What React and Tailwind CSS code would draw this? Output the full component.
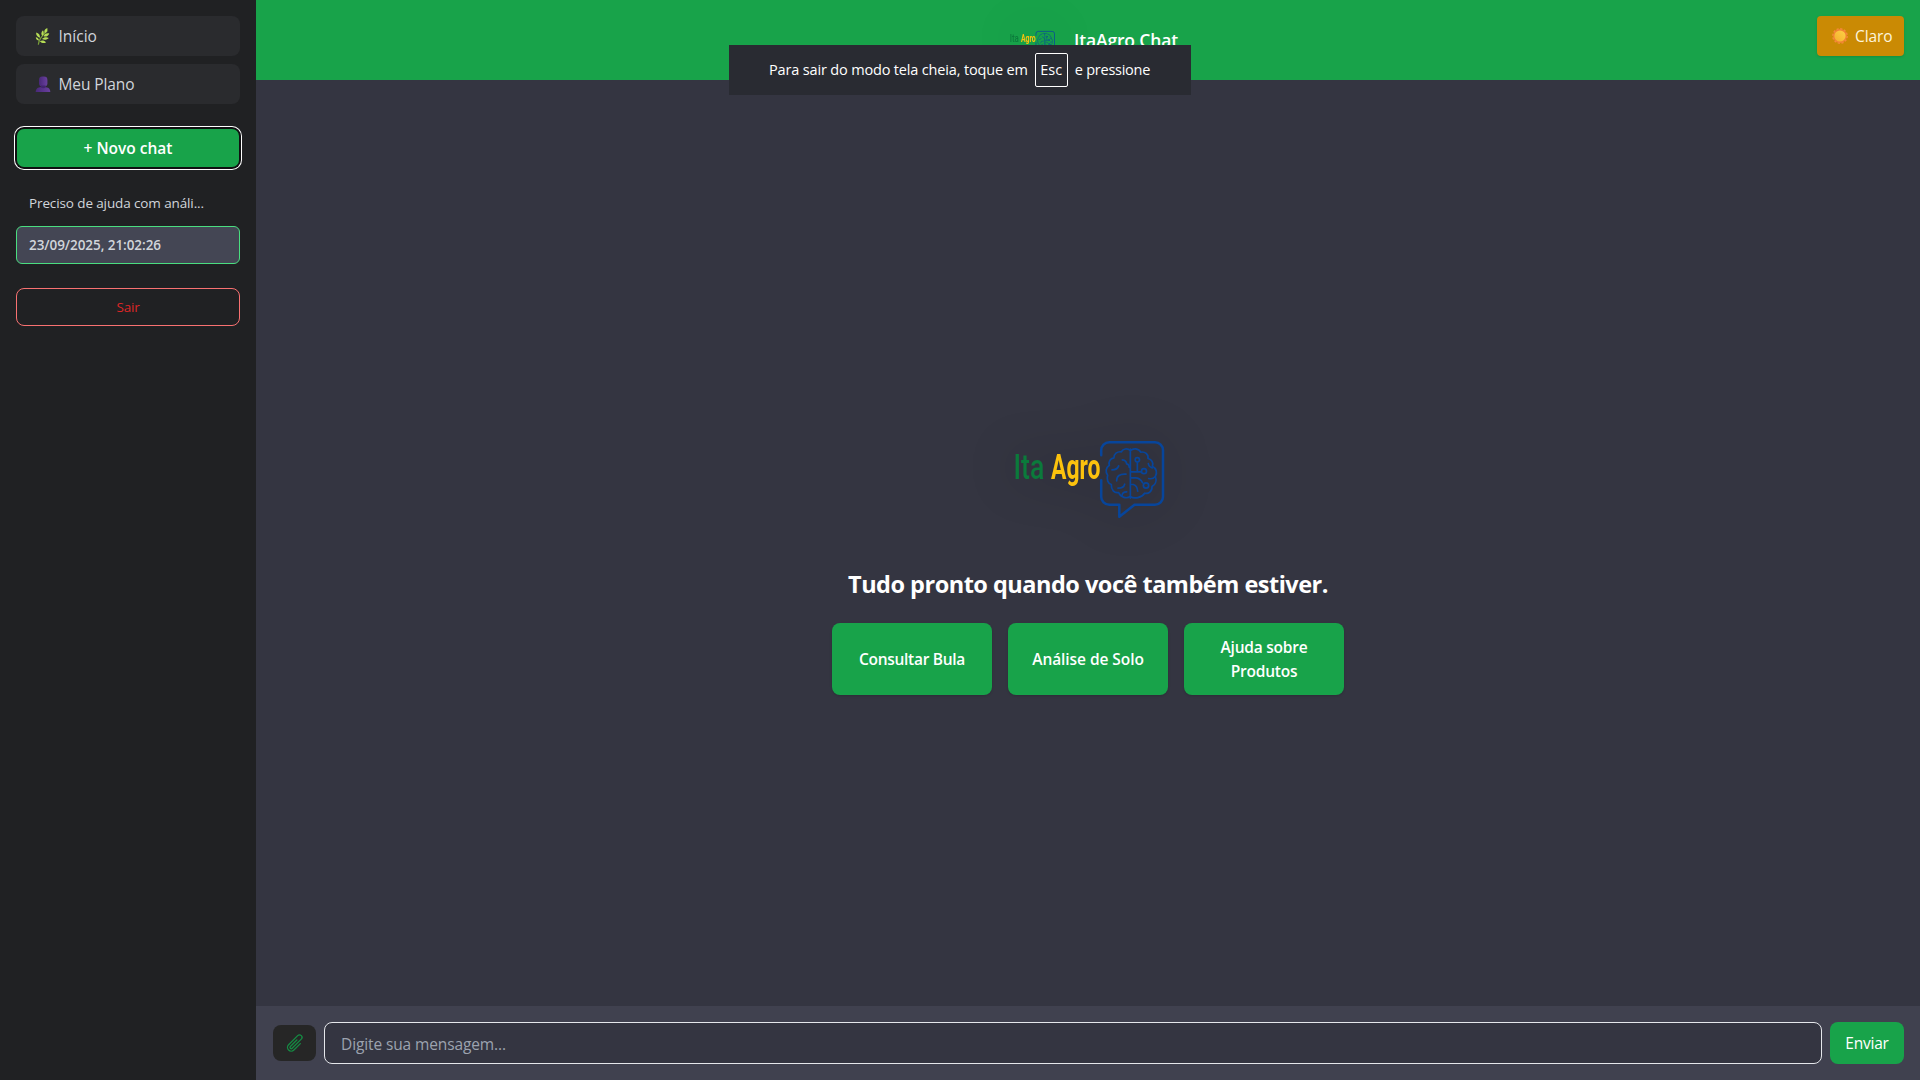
function Logo({ className }) {
  return (
    <svg viewBox="0 0 160 160" className={className} fill="none" aria-label="Ita Agro">
      <g fontFamily='"Roboto", "Liberation Sans", sans-serif' fontSize="35">
        <text transform="translate(5.500 88) scale(.76 1)" fontWeight="500" fill="#0b7a3b">Ita</text>
        <text transform="translate(43 88) scale(.655 1)" fontWeight="700" fill="#fcc20d">Agro</text>
      </g>
      <g transform="translate(0 -.8)" stroke="#07459b" strokeLinecap="round" strokeLinejoin="round">
        <path strokeWidth="2.5" d="M93.2 65V60a8 8 0 0 1 8-8H147a8 8 0 0 1 8 8v46.500a8 8 0 0 1-8 8H126.500L111.300 126.500V114.500H101.200a8 8 0 0 1-8-8V90" />
        <g transform="translate(82 39) scale(.33333)" strokeWidth="5">
          <path d="M121 60V207" />
          <path d="M121 64C112 56 99 58 94 68C82 66 71 74 72 86C60 88 55 98 58 108C48 115 45 129 53 138C49 151 54 163 64 166C63 182 73 193 86 190C92 206 110 209 121 202" />
          <path d="M121 64C130 56 146 57 152 69C165 66 176 76 174 88C186 91 191 101 187 111C199 117 203 131 196 141C201 155 196 167 186 172C187 187 175 195 164 192C155 206 133 210 121 202" />
          <path d="M97 92q12 1 13 12q8 1 8 11M66 122q16 0 20-12M80 155q0-22 28-20M84 177q17 0 20-12M96 200q0-12 14-12M142 99v27M122 128h32M122 146h14q14 0 22 15M122 166h8q12 4 13 20M175 103q1 10 12 13M176 148q12 3 20-6" />
          <circle cx="142" cy="92" r="6.500" />
          <circle cx="162" cy="126" r="7.500" />
          <circle cx="168" cy="169" r="8" />
        </g>
      </g>
    </svg>
  );
}

function HerbIcon() {
  return (
    <svg viewBox="0 0 16 18" className="ml-[3px] mr-[7.5px] h-[18px] w-4 shrink-0">
      <path d="M3.400 17.200C3.600 13 6.500 9 12 4" stroke="#7a9f3a" strokeWidth="1.200" fill="none" strokeLinecap="round" />
      <g fill="#b5dc55">
        <path d="M12.300 1C9.500 2 8.600 4 9.800 6.300 12 5.200 12.800 3.400 12.300 1Z" />
        <path d="M8 3.300C5.900 5 5.900 7.400 7.400 9 9 7.400 9.200 5.200 8 3.300Z" />
        <path d="M1.200 5.400C.8 8 2.300 9.900 5 10.700 5.300 8 3.600 6 1.200 5.400Z" />
        <path d="M.8 10.300C1 12.600 2.300 13.500 4 13.600 3.800 11.500 2.600 10.400.8 10.300Z" />
        <path d="M14.300 6.400C11.600 5.700 9.500 6.800 8.600 9.300 11.400 9.900 13.400 8.900 14.300 6.400Z" />
        <path d="M13.800 11C11.300 9.600 8.700 10.200 7 12 9.300 13.400 12 13 13.800 11Z" />
        <path d="M11 15.400C9.300 13.300 7 13 4.800 14.200 6.600 16.200 9 16.600 11 15.400Z" />
      </g>
    </svg>
  );
}

function PersonIcon() {
  return (
    <svg viewBox="0 0 16 18" className="ml-[3px] mr-[7.5px] h-[18px] w-4 shrink-0">
      <defs>
        <linearGradient id="person" x1="0" x2="1">
          <stop offset="0" stopColor="#482878" />
          <stop offset="1" stopColor="#6a409f" />
        </linearGradient>
      </defs>
      <path d="M.7 17C.7 13.800 2.900 12.200 6.200 12H9.800C13.100 12.200 15.300 13.800 15.300 17Z" fill="url(#person)" />
      <rect x="4" y="1.500" width="8.400" height="10.200" rx="3.400" fill="url(#person)" />
      <path d="M6 10.500h4.500v2q-2.250 1.500-4.500 0z" fill="#432570" />
    </svg>
  );
}

function SunIcon() {
  return (
    <svg viewBox="0 0 16 16" className="mr-[7px] h-4 w-4 shrink-0">
      <defs>
        <linearGradient id="sun" x1="0" y1="1" x2="1" y2="0">
          <stop offset="0" stopColor="#f3ae2c" />
          <stop offset="1" stopColor="#fdd246" />
        </linearGradient>
      </defs>
      <circle cx="8" cy="8" r="6.900" fill="#f08233" />
      <circle cx="8" cy="8" r="7.200" fill="none" stroke="#f58a3c" strokeWidth="1.400" strokeDasharray="2.200 1.570" />
      <circle cx="8" cy="8" r="5.600" fill="url(#sun)" />
    </svg>
  );
}

function PaperClipIcon() {
  return (
    <svg viewBox="0 0 24 24" className="h-5 w-5" fill="none" stroke="#168a43" strokeWidth="1.600" strokeLinecap="round" strokeLinejoin="round">
      <path d="m18.375 12.739-7.693 7.693a4.500 4.500 0 0 1-6.364-6.364l10.940-10.940A3 3 0 1 1 19.500 7.372L8.552 18.320m.009-.010-.010.010m5.699-9.941-7.810 7.810a1.500 1.500 0 0 0 2.112 2.130" />
    </svg>
  );
}

const LOGO_SHADOW = "drop-shadow-[0_0_24px_rgba(0,0,0,0.3)]";

function Sidebar() {
  return (
    <aside className="flex w-64 shrink-0 flex-col bg-[#202123] p-4">
      <nav className="flex flex-col gap-2 text-[15.5px] text-[#d1d5db]">
        <a className="flex h-10 items-center rounded-lg bg-[#2a2b2e] px-4">
          <HerbIcon />
          <span className="pt-[2px]">Início</span>
        </a>
        <a className="flex h-10 items-center rounded-lg bg-[#2a2b2e] px-4">
          <PersonIcon />
          <span className="pt-[2px] tracking-[-0.1px]">Meu Plano</span>
        </a>
      </nav>
      <button className="mx-px mt-[25px] h-[38px] rounded-[7px] bg-[#18a34a] pt-[2px] text-[15.5px] font-semibold text-white shadow-[0_0_0_2px_#101012,0_0_0_3px_#fff]">
        + Novo chat
      </button>
      <div className="mt-[17px] flex h-[38px] items-center px-[13px] text-[13.5px] tracking-[-0.115px] text-[#d1d5db]">
        Preciso de ajuda com análi...
      </div>
      <div className="mt-1 flex h-[38px] items-center rounded-md border border-[#4ade80] bg-[#444654] px-3 text-[13.5px] font-semibold tracking-[-0.06px] text-[#d1d5db]">
        23/09/2025, 21:02:26
      </div>
      <button className="mt-6 h-[38px] rounded-lg border border-[#f87171] text-[13.5px] tracking-[-0.25px] text-[#dc2626]">
        Sair
      </button>
    </aside>
  );
}

function FullscreenToast() {
  return (
    <div className="absolute left-[729px] top-[45px] flex h-[50px] w-[462px] items-center bg-[#292b32] pl-10 text-[14.5px] text-white">
      <span className="whitespace-nowrap tracking-[-0.16px]">Para sair do modo tela cheia, toque em</span>
      <span className="ml-[7px] flex h-[34px] w-[33px] items-center justify-center rounded-xs border border-white">Esc</span>
      <span className="ml-[7px] whitespace-nowrap tracking-[-0.25px]">e pressione</span>
    </div>
  );
}

export default function App() {
  return (
    <div className='relative flex h-screen w-screen overflow-hidden bg-[#343541] font-["Open_Sans","Noto_Sans",sans-serif]'>
      <Sidebar />
      <div className="flex min-w-0 flex-1 flex-col">
        <header className="relative flex h-20 shrink-0 items-center justify-center gap-[18px] overflow-hidden bg-[#18a34a] pl-[10px]">
          <Logo className={`h-12 w-12 ${LOGO_SHADOW}`} />
          <h1 className="pt-px text-[17.5px] font-semibold tracking-[-0.15px] text-white">ItaAgro Chat</h1>
          <button className="absolute right-4 top-4 flex h-10 w-[87px] items-center rounded bg-[#ca8a04] pl-[15px] text-[15.5px] text-[#fdf5dc] shadow">
            <SunIcon />
            <span className="pt-[2px] tracking-[-0.1px]">Claro</span>
          </button>
        </header>
        <main className="flex flex-1 flex-col items-center justify-center">
          <Logo className={`h-40 w-40 ${LOGO_SHADOW}`} />
          <h2 className="mt-[17px] h-[31px] text-[23.5px] font-bold leading-8 tracking-[-0.5px] text-white">
            Tudo pronto quando você também estiver.
          </h2>
          <div className="mt-6 grid grid-cols-[repeat(3,160px)] gap-4 text-[15.5px] font-semibold leading-6 text-white">
            <button className="h-[72px] rounded-lg bg-[#18a34a] tracking-[-0.28px] shadow">Consultar Bula</button>
            <button className="h-[72px] rounded-lg bg-[#18a34a] tracking-[-0.07px] shadow">Análise de Solo</button>
            <button className="h-[72px] rounded-lg bg-[#18a34a] px-8 tracking-[-0.22px] shadow">Ajuda sobre Produtos</button>
          </div>
        </main>
        <footer className="flex h-[74px] shrink-0 items-center gap-2 bg-[#40414f] pl-[17px] pr-4">
          <button className="flex h-9 w-[43px] items-center justify-center rounded-lg bg-[#262626]">
            <PaperClipIcon />
          </button>
          <input
            className="h-[42px] min-w-0 flex-1 rounded-lg border border-[#e5e7eb] bg-[#343541] px-4 pt-px text-[15.5px] tracking-[-0.12px] text-white placeholder:text-[#9ca3af] placeholder:opacity-100"
            placeholder="Digite sua mensagem..."
          />
          <button className="h-[42px] w-[74px] rounded-lg bg-[#18a34a] pt-[2px] text-[15.5px] tracking-[-0.2px] text-white">Enviar</button>
        </footer>
      </div>
      <FullscreenToast />
    </div>
  );
}
